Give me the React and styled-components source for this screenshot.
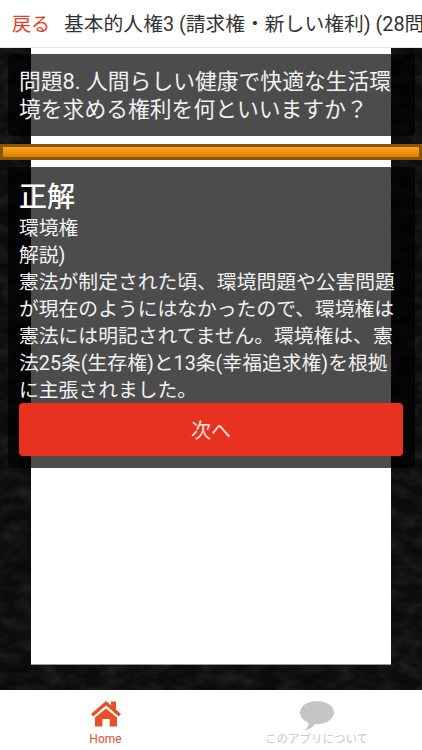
import styled, { createGlobalStyle } from 'styled-components';

const noise = encodeURIComponent(
  "<svg xmlns='http://www.w3.org/2000/svg' width='422' height='642'><filter id='n'><feTurbulence type='fractalNoise' baseFrequency='0.05 0.08' numOctaves='4' seed='7'/><feColorMatrix values='0 0 0 0 0.14 0 0 0 0 0.14 0 0 0 0 0.15 0.8 0 0 0 -0.3'/></filter><rect width='422' height='642' fill='#0c0c0d'/><rect width='422' height='642' filter='url(#n)' opacity='0.55'/></svg>"
);

const GlobalStyle = createGlobalStyle`
  html, body {
    margin: 0;
    background: #fff;
  }
  body {
    font-family: Roboto, 'Noto Sans CJK JP', sans-serif;
  }
`;

const Screen = styled.div`
  width: 422px;
  height: 750px;
  display: flex;
  flex-direction: column;
  overflow: hidden;
`;

const Header = styled.header`
  height: 48px;
  flex: none;
  display: flex;
  align-items: center;
  gap: 14px;
  padding: 0 0 3px 12px;
  box-sizing: border-box;
  background: #fff;
  border-bottom: 1px solid #e4e4e4;
  white-space: nowrap;
`;

const BackLink = styled.span`
  color: #e5402c;
  font-size: 19px;
  flex: none;
`;

const Title = styled.h1`
  margin: 0;
  color: #333;
  font-size: 19.8px;
  font-weight: 400;
`;

const Main = styled.main`
  flex: 1;
  display: grid;
  min-height: 0;
  background: #0c0c0d url("data:image/svg+xml,${noise}");
`;

const Sheet = styled.div`
  grid-area: 1 / 1;
  margin: 0 31px 25px;
  background: #fff;
  border-bottom: 1px solid #999;
`;

const Overlay = styled.div`
  grid-area: 1 / 1;
  display: flex;
  flex-direction: column;
  padding-top: 6px;
  min-width: 0;
`;

const Panel = styled.section`
  margin: 0 7px 0 8px;
  padding: ${p => p.$pad};
  background: rgba(0, 0, 0, 0.7);
  border-radius: 4px;
  color: #f1f1f1;
`;

const Question = styled.p`
  margin: 0;
  font-size: 21.8px;
  line-height: 28px;
`;

const Bar = styled.div`
  height: 16px;
  margin: 8px 0 7px;
  box-sizing: border-box;
  border: 3px solid #8a5403;
  background: linear-gradient(#f7a622, #ee9208 55%, #d67f04);
`;

const Answer = styled.h2`
  margin: 0;
  font-size: 28px;
  line-height: 35px;
  font-weight: 500;
  color: #fff;
`;

const Body = styled.p`
  margin: 0;
  font-size: 19.8px;
  line-height: 27px;
  width: 385px;
`;

const NextButton = styled.button`
  display: block;
  width: 384px;
  height: 53px;
  margin: -1px 0 0;
  border: 0;
  border-radius: 4px;
  background: #e8321f;
  color: #f6e4df;
  font: 400 20px Roboto, 'Noto Sans CJK JP', sans-serif;
`;

const TabBar = styled.nav`
  height: 60px;
  flex: none;
  display: grid;
  grid-template-columns: 1fr 1fr;
  background: #fff;
`;

const Tab = styled.div`
  display: flex;
  flex-direction: column;
  align-items: center;
  padding-top: 11px;
  color: ${p => p.$color};
`;

const TabLabel = styled.span`
  margin-top: ${p => p.$gap};
  font-size: ${p => p.$size};
  line-height: 16px;
`;

const HomeIcon = () => (
  <svg width="30" height="26" viewBox="0 0 30 26">
    <path
      fill="#e8502a"
      d="M15 0 L20 4.2 V0.5 H25 V8.6 L30 13 L27.8 15.4 L15 4.6 L2.2 15.4 L0 13 Z M15 7.4 L26 16.6 V25.5 H18.6 V18 H11.4 V25.5 H4 V16.6 Z"
    />
  </svg>
);

const BubbleIcon = () => (
  <svg width="34" height="30" viewBox="0 0 34 30">
    <path
      fill="#c5c5c5"
      d="M17 0 C26.4 0 34 5 34 11.6 C34 18.2 26.4 23.2 17 23.2 C16.2 23.2 15.4 23.2 14.7 23.1 C13 25.8 10 28.4 4.5 29.6 C7.2 27.6 8.4 25 8.6 21.8 C3.4 19.8 0 16 0 11.6 C0 5 7.6 0 17 0 Z"
    />
  </svg>
);

const App = () => {
  return (
    <Screen lang="ja">
      <GlobalStyle />
      <Header>
        <BackLink>戻る</BackLink>
        <Title>基本的人権3 (請求権・新しい権利) (28問)</Title>
      </Header>
      <Main>
        <Sheet />
        <Overlay>
          <Panel $pad="14px 7px 12px 11px">
            <Question>問題8. 人間らしい健康で快適な生活環境を求める権利を何といいますか？</Question>
          </Panel>
          <Bar />
          <Panel $pad="13px 0 12px 11px">
            <Answer>正解</Answer>
            <Body>
              環境権
              <br />
              解説)
              <br />
              憲法が制定された頃、環境問題や公害問題が現在のようにはなかったので、環境権は憲法には明記されてません。環境権は、憲法25条(生存権)と13条(幸福追求権)を根拠に主張されました。
            </Body>
            <NextButton>次へ</NextButton>
          </Panel>
        </Overlay>
      </Main>
      <TabBar>
        <Tab $color="#e8502a">
          <HomeIcon />
          <TabLabel $gap="4px" $size="12px">Home</TabLabel>
        </Tab>
        <Tab $color="#c8c8c8">
          <BubbleIcon />
          <TabLabel $gap="0" $size="11.5px">このアプリについて</TabLabel>
        </Tab>
      </TabBar>
    </Screen>
  );
};

export default App;
